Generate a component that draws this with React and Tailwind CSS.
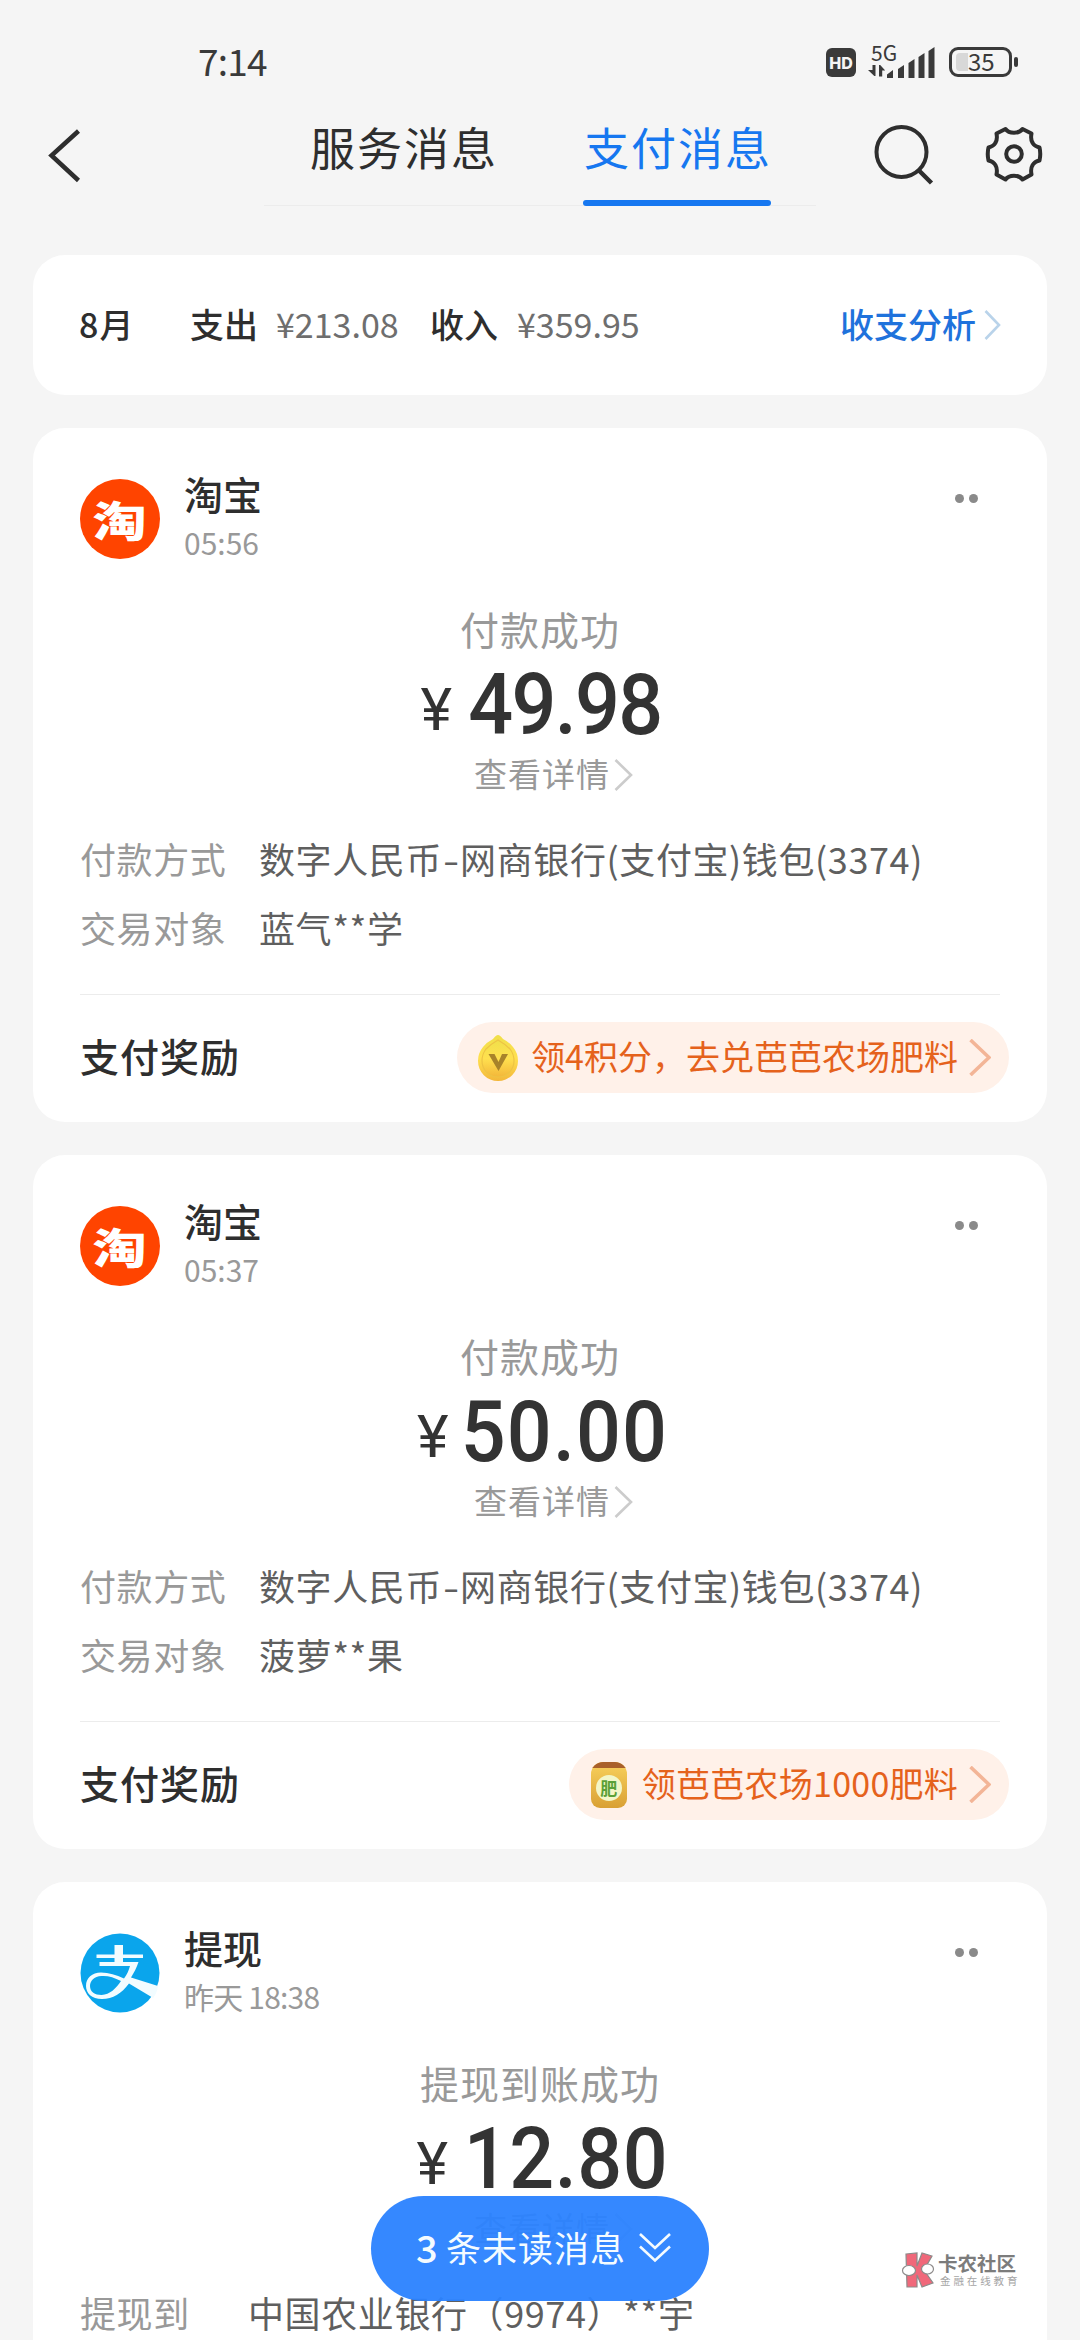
import React from "react";

const CJK = "font-['Noto_Sans_CJK_SC',sans-serif]";

function Chevron({ className, width = 17, height = 31, stroke = 2.6 }) {
  return (
    <svg className={className} width={width} height={height} viewBox={`0 0 ${width} ${height}`} fill="none" stroke="currentColor" strokeWidth={stroke}>
      <path d={`M1.5 1 L${width - 2} ${height / 2} L1.5 ${height - 1}`} />
    </svg>
  );
}

function StatusBar() {
  return (
    <div className="flex h-[124px] items-start pl-[198px] text-[#3a3a3a]">
      <div className="mt-[40px] w-[628px] text-[37px] leading-[40px] tracking-[-0.800px]">7:14</div>
      <div className="mt-[48px] flex h-[29px] w-[30px] items-center justify-center rounded-[6px] bg-[#3a3a3a] font-['Inter',sans-serif] text-[16px] leading-none font-extrabold text-[#f5f5f5]">HD</div>
      <div className="mt-[44px] ml-[12px] flex h-[36px] w-[70px] items-end">
        <div className="flex h-[36px] w-[19px] flex-col justify-between">
          <span className="pl-[3px] text-[21px] leading-[16px]">5G</span>
          <svg className="mb-[3px]" width="17" height="12" viewBox="868 66 17 12" fill="currentColor">
            <path d="M872.500 66h3v11h-1.200l-6.300-6h4.500zM879 77.500v-11.500h1.200l5 5.500h-3v6z" />
          </svg>
        </div>
        <svg className="mb-[2px]" width="48" height="31" viewBox="887 47 48 31" fill="currentColor">
          <path d="M887 78v-3.500l6-4.500v8zM898 78v-9l6-4v13zM908.500 78v-15l6-4v19zM918.500 78v-21l6-4v25zM928.500 78v-27l6-4v31z" />
        </svg>
      </div>
      <div className="mt-[47px] ml-[11px] flex items-center">
        <div className="flex h-[30px] w-[63px] items-center rounded-[9px] border-[3px] border-[#3a3a3a] pl-[4px]">
          <div className="h-[18px] w-[12px] rounded-l-[4px] bg-[#d8d8d8]" />
          <span className="text-[24px] leading-[20px] pb-[2px]">35</span>
        </div>
        <div className="ml-[2px] h-[10px] w-[4px] rounded-full bg-[#3a3a3a]" />
      </div>
    </div>
  );
}

function NavBar() {
  return (
    <div className="flex h-[131px] items-start text-[#2e2e2e]">
      <svg className="mt-[5px] ml-[48px] w-[33px]" width="33" height="54" viewBox="48 129 33 54" fill="none" stroke="currentColor" strokeWidth="4.500">
        <path d="M78.500 131 L51.500 155.500 L78.500 180.500" />
      </svg>
      <div className="ml-[183px] flex h-[82px] w-[552px] border-b border-[#ececec] pl-[38px] text-[45px] leading-[45px] tracking-[2px]">
        <div className="w-[188px] pl-[8px] whitespace-nowrap">服务消息</div>
        <div className="ml-[93px] flex h-[82px] w-[188px] flex-col justify-between text-[#1677f0]">
          <div className="pl-[1px] whitespace-nowrap">支付消息</div>
          <div className="h-[6px] rounded-full bg-[#1677f0]" />
        </div>
      </div>
      <svg className="ml-[56px]" width="64" height="64" viewBox="872 124 64 64" fill="none" stroke="currentColor" strokeWidth="4">
        <circle cx="901.500" cy="152" r="25" />
        <path d="M918.500 170 L931.500 183" strokeWidth="4.500" />
      </svg>
      <svg className="ml-[48px]" width="60" height="60" viewBox="984 125 60 60" fill="none" stroke="currentColor" strokeWidth="4" strokeLinejoin="round">
        <path d="M1005.500 130C1009 135 1019 135 1022.500 130L1031.500 134.500C1030 142 1033 147 1039.500 148.500Q1041 155 1039.500 161.500C1033 163 1030 168 1031.500 175.500L1022.500 180.500C1019 175.500 1009 175.500 1005.500 180.500L996.500 175.500C998 168 995 163 988.500 161.500Q987 155 988.500 148.500C995 147 998 142 996.500 134.500Z" />
        <circle cx="1014" cy="155" r="7.800" />
      </svg>
    </div>
  );
}

function Summary() {
  return (
    <section className="flex h-[140px] items-center rounded-[32px] bg-white pr-[46px] pb-[2px] pl-[46px] text-[34px] leading-[36px] text-[#2e2e2e]">
      <span className="w-[111px] tracking-[1px] font-medium">8月</span>
      <span className="w-[86px] font-medium">支出</span>
      <span className="w-[154px] text-[#6e6e6e]">¥213.08</span>
      <span className="w-[87px] font-medium">收入</span>
      <span className="text-[#6e6e6e]">¥359.95</span>
      <span className="ml-auto font-medium text-[#1f72dc]">收支分析</span>
      <Chevron className="mt-[2px] ml-[8px] text-[#b9d3ea]" width={17} height={30} />
    </section>
  );
}

function TaobaoLogo() {
  return (
    <div className="flex h-[80px] w-[80px] shrink-0 items-center justify-center rounded-full bg-[#ff4400]">
      <span className="scale-x-[1.06] scale-y-[0.82] text-[51px] leading-none font-black text-white">淘</span>
    </div>
  );
}

function AlipayLogo() {
  return (
    <svg className="shrink-0" width="80" height="80" viewBox="0 0 80 80">
      <circle cx="40" cy="40" r="39.500" fill="#0aa5ec" />
      <g fill="#f2fcff">
        <path d="M34.500 12h8.500v9.500h20v3.500h-20v4h15.500c-2 6-4.500 10.500-7.500 15.500l27 8.500c-.6 4.500-2.300 8.500-4.800 12L49 50.500C41.500 60.500 33 66 22 66C11.500 66 6 60 6 53C6 45 12 39.500 21 39.500C29 39.500 36 42 44 45.500c3-4 4.800-8 6-12.500H19.500v-4h15v-4H16.500v-3.500h18z" />
      </g>
      <path d="M41 48C34 44.500 28 42.500 21.500 43C14 43.500 10 48 10 53C10 59 15 62 21.500 62C30 61.500 36 55.500 41 48z" fill="#0aa5ec" />
    </svg>
  );
}

function DropCoin() {
  return (
    <svg width="42" height="48" viewBox="0 0 42 48">
      <defs>
        <linearGradient id="coin" x1="0" y1="0" x2="0" y2="1">
          <stop offset="0" stopColor="#f0df4a" />
          <stop offset="0.500" stopColor="#ffe04f" />
          <stop offset="1" stopColor="#f3b73a" />
        </linearGradient>
      </defs>
      <path d="M21 1Q23 1 26 5Q32 8 36 13Q41 19 41 27A20 20 0 0 1 1 27Q1 19 6 13Q10 8 16 5Q19 1 21 1z" fill="url(#coin)" />
      <path d="M21 6Q28 10 33 15Q37 20 37 27A16 16 0 0 1 5 27Q5 20 9 15Q14 10 21 6z" fill="url(#coin)" stroke="#edc344" strokeWidth="1.200" />
      <path d="M11.500 20h6l4 8 3.500-8h6L21.500 37z" fill="#a8832a" />
    </svg>
  );
}

function FertilizerCan() {
  return (
    <div className="flex h-[46px] w-[36px] flex-col items-center overflow-hidden rounded-t-[12px] rounded-b-[9px] bg-linear-to-b from-[#f8d15c] to-[#d9a034]">
      <div className="h-[6px] w-full bg-[#a9602b]" />
      <div className="mt-[7px] flex h-[26px] w-[26px] items-center justify-center rounded-full bg-[#f3f6c8] text-[17px] leading-none font-bold text-[#5ba038]">肥</div>
    </div>
  );
}

function Amount({ value, yenWidth, width, tracking }) {
  return (
    <div className="mt-[14px] flex h-[84px] justify-center font-['Roboto',sans-serif] text-[#333]">
      <span className="mt-[6px] text-[60px] leading-[84px]" style={{ width: yenWidth }}>¥</span>
      <span className="mt-px flex justify-center text-[85px] leading-[84px] font-medium" style={{ width, letterSpacing: tracking }}>
        <span className="scale-x-[0.93]">{value}</span>
      </span>
    </div>
  );
}

function Message({ logo, name, time, status, amount, rows, reward, labelWidth }) {
  return (
    <section className="flex h-[694px] shrink-0 flex-col rounded-[32px] bg-white pt-[51px] pl-[47px]">
      <header className="flex h-[80px] items-start">
        {logo}
        <div className="-mt-[6px] ml-[24px]">
          <div className="text-[39px] leading-[40px] font-medium text-[#2e2e2e]">{name}</div>
          <div className="mt-[14px] text-[30px] leading-[30px] text-[#999]">{time}</div>
        </div>
        <div className="mt-[15px] mr-[69px] ml-auto flex gap-[5px]">
          <i className="h-[9px] w-[9px] rounded-full bg-[#8a8a8a]" />
          <i className="h-[9px] w-[9px] rounded-full bg-[#8a8a8a]" />
        </div>
      </header>
      <div className="mr-[47px]">
        <div className="mt-[49px] text-center text-[39px] leading-[40px] tracking-[1px] text-[#999]">{status}</div>
        <Amount {...amount} />
        <div className="mt-[10px] flex h-[34px] items-center justify-center pl-[27px] text-[33px] leading-[34px] tracking-[1px] text-[#999]">
          查看详情
          <Chevron className="mt-[4px] ml-[4px] text-[#ccc]" width={19} height={32} />
        </div>
      </div>
      <div className="mt-[50px] flex flex-col gap-[32px] text-[36px] leading-[37px] tracking-[0.600px]">
        {rows.map(([label, value]) => (
          <div key={label} className="flex h-[37px] whitespace-nowrap">
            <span className="text-[#999]" style={{ width: labelWidth }}>{label}</span>
            <span className="text-[#5f5f5f]">{value}</span>
          </div>
        ))}
      </div>
      {reward && (
        <>
          <div className="mt-[48px] mr-[47px] h-px bg-[#ececec]" />
          <footer className="mt-[27px] mr-[38px] flex h-[71px] items-center justify-between">
            <span className="pb-[5px] text-[39px] leading-[40px] tracking-[1px] font-medium text-[#2e2e2e]">支付奖励</span>
            {reward}
          </footer>
        </>
      )}
    </section>
  );
}

function PayMethod() {
  return (
    <>
      数字人民币<span className="mr-[2px] ml-[3px] inline-block scale-x-[1.3]">-</span>网商银行(支付宝)钱包(3374)
    </>
  );
}

function Reward({ children, icon }) {
  return (
    <div className="flex h-[71px] items-center rounded-full bg-[#fff1e9] pr-[18px] pl-[20px] text-[34px] leading-[36px] text-[#e5621c]">
      {icon}
      <span className="pb-[3px]">{children}</span>
      <Chevron className="ml-[11px] text-[#f3b597]" width={22} height={37} stroke={3.6} />
    </div>
  );
}

function UnreadButton() {
  return (
    <button className="absolute top-[2196px] left-[371px] flex h-[105px] w-[338px] items-center rounded-full bg-[#2a82ff]/95 pl-[45px] text-[#f4fbff]">
      <span className="w-[30px] pb-[3px] text-left text-[38px] leading-[40px] font-medium">3</span>
      <span className="pb-[3px] text-[35px] leading-[40px] tracking-[1px] whitespace-nowrap">条未读消息</span>
      <svg className="mt-[-2px] ml-[12px]" width="34" height="31" viewBox="0 0 34 31" fill="none" stroke="currentColor" strokeWidth="2.600">
        <path d="M2 2l15 14L32 2M2 14.500l15 14 15-14" />
      </svg>
    </button>
  );
}

function Watermark() {
  return (
    <div className="absolute top-[2252px] left-[901px] flex h-[37px] gap-[3px]">
      <svg width="34" height="36" viewBox="0 0 34 36" stroke="#8d8a8a" strokeWidth="1.200">
        <path d="M5 2l11-1v13l5-13 10 3-8 14 9 13-11 4-5-12v12H6z" fill="#f0687a" />
        <ellipse cx="8" cy="18.500" rx="6.500" ry="5" fill="#fff" />
        <ellipse cx="26.500" cy="17" rx="6" ry="5" fill="#fff" />
      </svg>
      <div className="whitespace-nowrap">
        <div className="mt-[1px] text-[19.500px] leading-[20px] font-bold text-[#7c7c7c]">卡农社区</div>
        <div className="mt-[2px] ml-[2px] text-[10.500px] leading-[12px] tracking-[2.900px] text-[#a5a5a5]">金融在线教育</div>
      </div>
    </div>
  );
}

export default function App() {
  return (
    <div className={`${CJK} relative h-[2340px] w-[1080px] overflow-hidden bg-[#f5f5f5]`}>
      <StatusBar />
      <NavBar />
      <main className="flex flex-col gap-[33px] px-[33px]">
        <Summary />
        <Message
          logo={<TaobaoLogo />}
          name="淘宝"
          time="05:56"
          status="付款成功"
          amount={{ value: "49.98", yenWidth: 49, width: 190, tracking: -1.8 }}
          labelWidth={179}
          rows={[["付款方式", <PayMethod />], ["交易对象", "蓝气**学"]]}
          reward={<Reward icon={<span className="mr-[12px]"><DropCoin /></span>}>领4积分，去兑芭芭农场肥料</Reward>}
        />
        <Message
          logo={<TaobaoLogo />}
          name="淘宝"
          time="05:37"
          status="付款成功"
          amount={{ value: "50.00", yenWidth: 49, width: 197, tracking: 1.2 }}
          labelWidth={179}
          rows={[["付款方式", <PayMethod />], ["交易对象", "菠萝**果"]]}
          reward={<Reward icon={<span className="mr-[15px] ml-[2px]"><FertilizerCan /></span>}><span className="tracking-[0.250px]">领芭芭农场1000肥料</span></Reward>}
        />
        <Message
          logo={<AlipayLogo />}
          name="提现"
          time={<span className="tracking-[-0.800px]">昨天 18:38</span>}
          status="提现到账成功"
          amount={{ value: "12.80", yenWidth: 52, width: 195, tracking: 0.6 }}
          labelWidth={168}
          rows={[["提现到", "中国农业银行（9974）**宇"]]}
        />
      </main>
      <UnreadButton />
      <Watermark />
    </div>
  );
}
